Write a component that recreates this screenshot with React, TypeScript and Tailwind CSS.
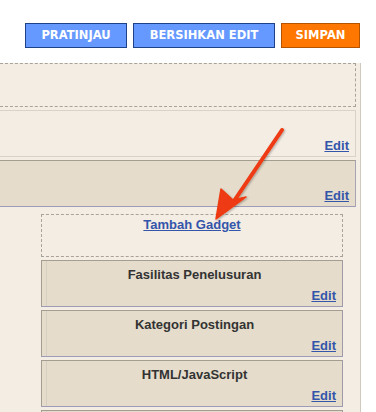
import React from "react";

const widgets = ["Fasilitas Penelusuran", "Kategori Postingan", "HTML/JavaScript", ""];

function EditLink() {
  return (
    <a className="text-[13px] font-bold leading-none text-[#3355aa] underline" href="#">
      Edit
    </a>
  );
}

function Grip() {
  return (
    <div className="w-[5px] shrink-0 border-r border-[#d6cfc2] bg-[radial-gradient(#b8b0a2_0.6px,transparent_0.7px)] bg-[length:2px_2px]" />
  );
}

function WidgetBox({ title }: { title: string }) {
  return (
    <div className="flex h-[47px] border border-t-[#a39d92] border-l-[#a39d92] border-r-[#9f9aa8] border-b-[#9c9cb8] bg-[#e5dccb]">
      <Grip />
      <div className="flex flex-1 flex-col justify-between px-[6px] pt-[7px] pb-[4px]">
        <p className="text-center text-[13px] font-bold leading-none text-[#333]">{title}</p>
        {title && (
          <div className="flex justify-end">
            <EditLink />
          </div>
        )}
      </div>
    </div>
  );
}

export default function App() {
  return (
    <div className="relative h-[412px] w-[376px] overflow-hidden bg-white font-['Liberation_Sans',Arial,sans-serif]">
      <div className="flex justify-end gap-[6px] pt-[23px] pr-[16px] font-['DejaVu_Sans',Verdana,sans-serif] text-[11.5px] font-bold text-white">
        <button className="h-[25px] w-[102px] border border-[#1d4289] bg-[#6699ff]">PRATINJAU</button>
        <button className="h-[25px] w-[142px] border border-[#1d4289] bg-[#6699ff]">BERSIHKAN EDIT</button>
        <button className="h-[25px] w-[79px] border border-[#b45300] bg-[#ff7700]">SIMPAN</button>
      </div>

      <div className="mt-[15px] w-[361px] border-r border-[#cfc9c0] bg-[#f4ede4] pr-[4px]">
        <div className="h-[44px] border border-dashed border-l-0 border-[#a8a29a]" />
        <div className="mt-[3px] flex h-[47px] items-end justify-end border border-l-0 border-[#d8d2c8] px-[6px] pb-[4px]">
          <EditLink />
        </div>
        <div className="mt-[3px] flex h-[47px] items-end justify-end border border-l-0 border-t-[#a39d92] border-r-[#a8a4b0] border-b-[#9c9cb8] bg-[#e5dccb] px-[6px] pb-[4px]">
          <EditLink />
        </div>

        <div className="mt-[7px] ml-[41px] mr-[13px] flex flex-col gap-[3px]">
          <div className="h-[43px] border border-dashed border-[#a8a29a] text-center leading-[18px]">
            <a className="text-[13px] font-bold text-[#3355aa] underline" href="#">
              Tambah Gadget
            </a>
          </div>
          {widgets.map((w, i) => (
            <WidgetBox key={i} title={w} />
          ))}
        </div>
      </div>

      <svg className="absolute left-0 top-0" width="376" height="412" viewBox="0 0 376 412">
        <defs>
          <filter id="sh" x="-20%" y="-20%" width="140%" height="140%">
            <feDropShadow dx="1" dy="1" stdDeviation="1" floodColor="#000" floodOpacity="0.3" />
          </filter>
        </defs>
        <g filter="url(#sh)">
          <line x1="282" y1="130" x2="234" y2="201" stroke="#ee3a12" strokeWidth="4" strokeLinecap="round" />
          <polygon points="216,219 221,189 233,200 246,197" fill="#ee3a12" stroke="#ee3a12" strokeWidth="1.5" strokeLinejoin="round" />
        </g>
      </svg>
    </div>
  );
}
